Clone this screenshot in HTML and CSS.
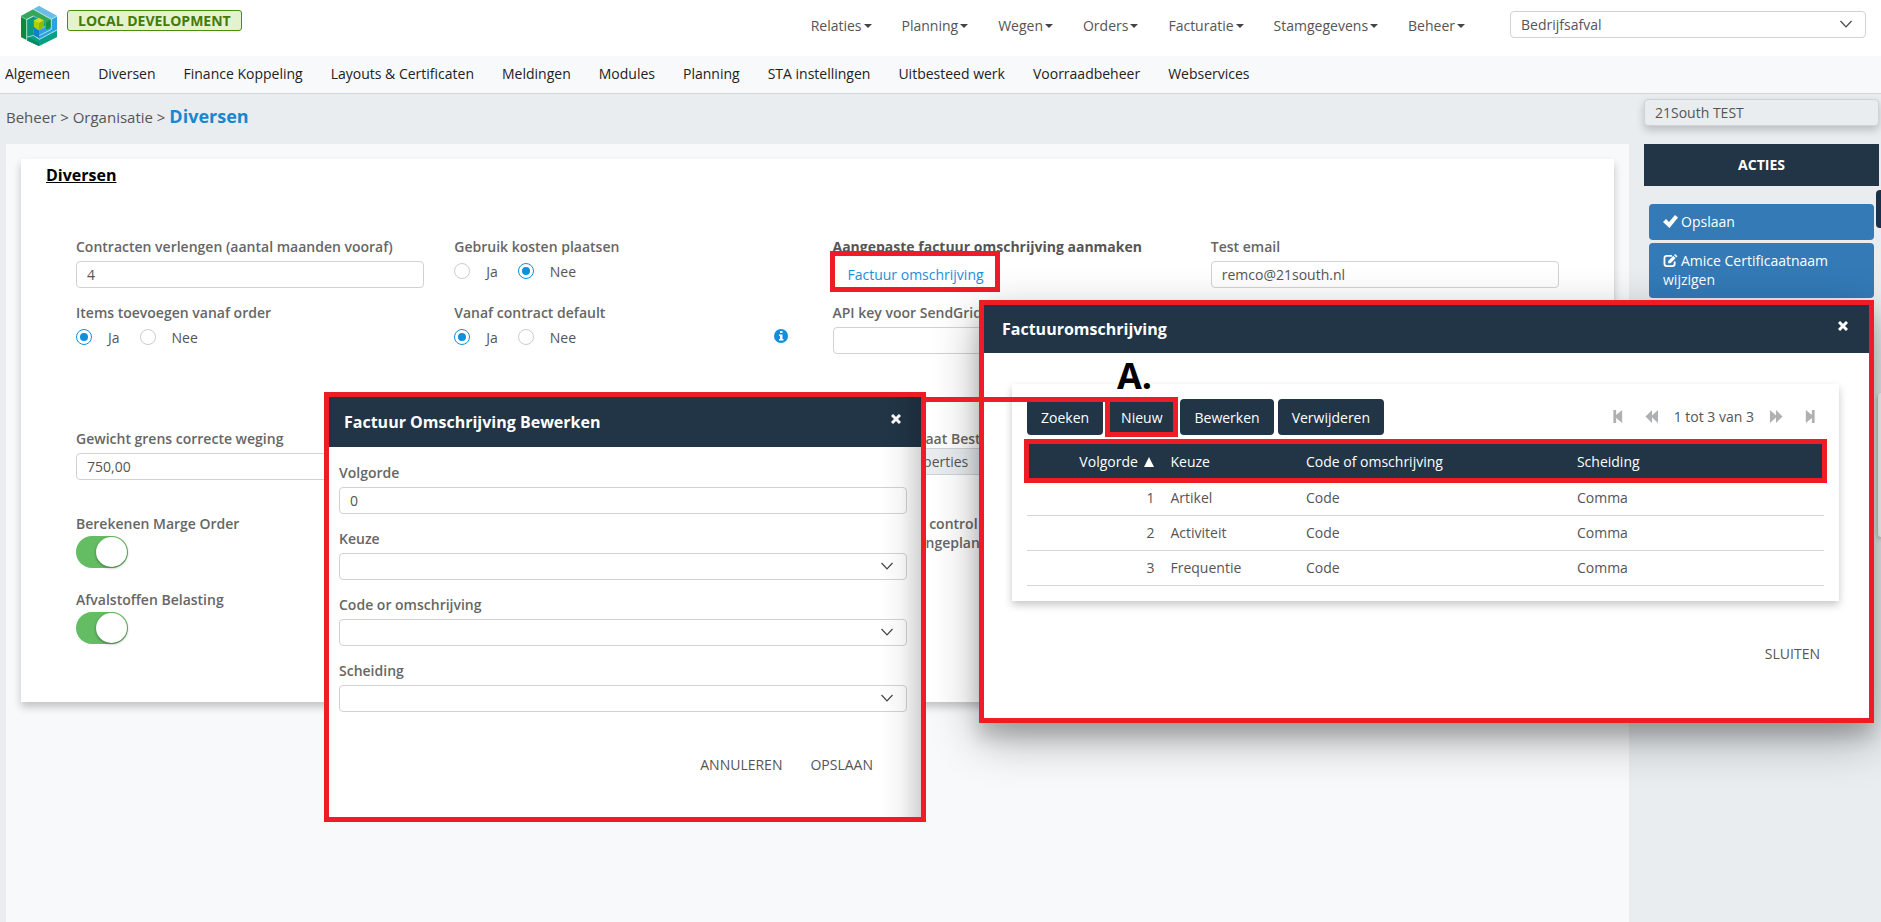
FILE: index.html
```html
<!DOCTYPE html>
<html lang="nl">
<head>
<meta charset="utf-8">
<title>Diversen</title>
<meta name="viewport" content="width=device-width, initial-scale=1">
<link rel="stylesheet" href="styles.css">
</head>
<body>
<svg class="sprite" aria-hidden="true">
  <symbol id="chevron" viewBox="0 0 12 8"><path d="M.5 1 6 6.8 11.500 1" fill="none" stroke="currentColor" stroke-width="1.200"/></symbol>
  <symbol id="close" viewBox="0 0 10 10"><path d="M1 1l8 8M9 1L1 9" fill="none" stroke="currentColor" stroke-width="3"/></symbol>
  <symbol id="first" viewBox="0 0 10 14"><path d="M0 0h3v5.500L9.500 0v14L3 8.500V14H0z" fill="currentColor"/></symbol>
  <symbol id="prev" viewBox="0 0 14 14"><path d="M7 0v5.800L13.500 0v14L7 8.200V14L0 7z" fill="currentColor"/></symbol>
</svg>

<header class="topbar">
  <svg class="logo" viewBox="0 0 36 40" role="img" aria-label="Logo">
    <path d="M18 0 36 10V31L18 40 0 31V10z" fill="#7cc9b0"/>
    <path d="M0 11 5.500 14V34L0 31z" fill="#0a8a3c"/>
    <path d="M0 10 12 3.400 30 13.500V23.500L24.500 26V16.500L12.500 9.500 5.500 13z" fill="#35a75a"/>
    <path d="M24.800 16.500 30 13.500V23.500L24.800 26z" fill="#0f9441"/>
    <path d="M12.700 3 18 0 36 10 30.500 13z" fill="#6cbcea"/>
    <path d="M30.500 13.500 36 10.500V23.500L18.500 33V27L30.500 21z" fill="#2ba3e2"/>
    <path d="M6 14 12.500 10.500 24 16.500V20L12.500 23V34L6 31z" fill="#0a9a7c"/>
    <path d="M6 31 12 28.500 18 33.500 36 24.200V31L18 40 6 34.500z" fill="#06a087"/>
    <path d="M6 31 18 36.500V40L6 34.500z" fill="#088a63"/>
    <path d="M12.500 21.500 18.500 24.500V32.500L12.500 29.500z" fill="#0b83cc"/>
    <path d="M18.500 24 24.500 21V26L18.500 29z" fill="#2f9fe0"/>
    <path d="M12.800 14.500 18 12 22.800 14.500V21L18 23.800 12.800 21z" fill="#b3cc06"/>
    <path d="M12.800 14.500 18 12 22.800 14.500 18 17z" fill="#d3de1c"/>
    <path d="M18 17 22.800 14.500V21L18 23.800z" fill="#93b50c"/>
    <path d="M5.700 34V13.500L12.300 10M30.300 13.200V23.500L18.300 29.500M12.300 3.200 30.300 13.200 36 10.200M6 31 12.500 29.500 18.500 33.300 36 24" fill="none" stroke="#d8f0ec" stroke-width=".7"/>
  </svg>
  <span class="env">LOCAL DEVELOPMENT</span>
  <nav class="menu" aria-label="Hoofdmenu">
    <button type="button">Relaties</button>
    <button type="button">Planning</button>
    <button type="button">Wegen</button>
    <button type="button">Orders</button>
    <button type="button">Facturatie</button>
    <button type="button">Stamgegevens</button>
    <button type="button">Beheer</button>
  </nav>
  <div class="select company">
    <select aria-label="Bedrijf"><option>Bedrijfsafval</option></select>
    <svg class="chevron"><use href="#chevron"/></svg>
  </div>
</header>

<nav class="subnav" aria-label="Submenu">
  <a href="#">Algemeen</a>
  <a href="#">Diversen</a>
  <a href="#">Finance Koppeling</a>
  <a href="#">Layouts &amp; Certificaten</a>
  <a href="#">Meldingen</a>
  <a href="#">Modules</a>
  <a href="#">Planning</a>
  <a href="#">STA instellingen</a>
  <a href="#">Uitbesteed werk</a>
  <a href="#">Voorraadbeheer</a>
  <a href="#">Webservices</a>
</nav>

<div class="page">
  <div class="crumbs">Beheer &gt; Organisatie &gt; <h1>Diversen</h1></div>
  <div class="tenant"><input class="control disabled" type="text" value="21South TEST" aria-label="Organisatie" readonly></div>

  <main class="panel">
    <form class="card">
      <h2>Diversen</h2>

      <div class="row">
        <div class="field">
          <label for="months">Contracten verlengen (aantal maanden vooraf)</label>
          <input class="control" id="months" type="text" value="4">
        </div>
        <fieldset class="field">
          <legend>Gebruik kosten plaatsen</legend>
          <div class="radios">
            <label><input type="radio" name="cost">Ja</label>
            <label><input type="radio" name="cost" checked>Nee</label>
          </div>
        </fieldset>
        <div class="field marked-field">
          <span class="label strong">Aangepaste factuur omschrijving aanmaken</span>
          <a class="link-button" href="#">Factuur omschrijving</a>
          <span class="mark"></span>
        </div>
        <div class="field">
          <label for="mail">Test email</label>
          <input class="control" id="mail" type="text" value="remco@21south.nl">
        </div>
      </div>

      <div class="row">
        <fieldset class="field">
          <legend>Items toevoegen vanaf order</legend>
          <div class="radios">
            <label><input type="radio" name="items" checked>Ja</label>
            <label><input type="radio" name="items">Nee</label>
          </div>
        </fieldset>
        <fieldset class="field">
          <legend>Vanaf contract default</legend>
          <div class="radios">
            <label><input type="radio" name="contract" checked>Ja</label>
            <label><input type="radio" name="contract">Nee</label>
          </div>
          <svg class="info" viewBox="0 0 14 14" role="img" aria-label="Info"><circle cx="7" cy="7" r="7" fill="#0f8fdc"/><path d="M6 2h2.500v2H6zM5 5.500h3.500v4.500H9.500v1.500H5V10h1V7H5z" fill="#fff"/></svg>
        </fieldset>
        <div class="field">
          <label for="apikey">API key voor SendGrid</label>
          <input class="control" id="apikey" type="text">
        </div>
      </div>

      <div class="row row-weight">
        <div class="field">
          <label for="weight">Gewicht grens correcte weging</label>
          <input class="control" id="weight" type="text" value="750,00">
        </div>
        <div class="field third tight">
          <label class="inset" for="props">aat Best</label>
          <input class="control disabled inset-value" id="props" type="text" value="Properties" readonly>
        </div>
      </div>

      <div class="row row-switch">
        <div class="field">
          <label for="margin">Berekenen Marge Order</label>
          <input class="switch" id="margin" type="checkbox" role="switch" checked>
        </div>
        <div class="field third">
          <span class="label inset">&nbsp;control<br>ngeplan</span>
        </div>
      </div>

      <div class="row row-switch">
        <div class="field">
          <label for="waste">Afvalstoffen Belasting</label>
          <input class="switch" id="waste" type="checkbox" role="switch" checked>
        </div>
      </div>
    </form>
  </main>

  <aside class="side">
    <h2>ACTIES</h2>
    <div class="actions">
      <button type="button"><svg viewBox="0 0 15 13"><path d="M0 7 3 4l3 3 6-7 3 2.500L6.500 13z" fill="currentColor"/></svg>Opslaan</button>
      <button type="button"><svg viewBox="0 0 15 14"><path d="M9 2H3.500Q1 2 1 4.500v6Q1 13 3.500 13h6Q12 13 12 10.500V8" fill="none" stroke="currentColor" stroke-width="2"/><path d="M5 10V7.500l5.500-5.500 2.500 2.500L7.500 10zM11.300 1.200 12.500 0 15 2.500 13.800 3.700z" fill="currentColor"/></svg>Amice Certificaatnaam wijzigen</button>
    </div>
  </aside>
</div>

<span class="edge-tab"></span>
<span class="edge-panel"></span>

<section class="dialog list" role="dialog" aria-labelledby="list-title">
  <header><h2 id="list-title">Factuuromschrijving</h2><button type="button" aria-label="Sluiten"><svg><use href="#close"/></svg></button></header>
  <div class="list-body">
    <span class="letter">A.</span>
    <div class="list-card">
      <div class="toolbar">
        <button class="dark" type="button">Zoeken</button>
        <button class="dark ringed" type="button">Nieuw</button>
        <button class="dark" type="button">Bewerken</button>
        <button class="dark" type="button">Verwijderen</button>
        <div class="pager">
          <button type="button" aria-label="Eerste"><svg class="narrow"><use href="#first"/></svg></button>
          <button type="button" aria-label="Vorige"><svg><use href="#prev"/></svg></button>
          <span>1 tot 3 van 3</span>
          <button type="button" aria-label="Volgende"><svg class="flip"><use href="#prev"/></svg></button>
          <button type="button" aria-label="Laatste"><svg class="narrow last flip"><use href="#first"/></svg></button>
        </div>
      </div>
      <table>
        <thead><tr><th class="num">Volgorde <svg class="sort" viewBox="0 0 10 10"><path d="M5 0l5 10H0z" fill="currentColor"/></svg></th><th class="c2">Keuze</th><th class="c3">Code of omschrijving</th><th>Scheiding</th></tr></thead>
        <tbody>
          <tr><td class="num">1</td><td>Artikel</td><td>Code</td><td>Comma</td></tr>
          <tr><td class="num">2</td><td>Activiteit</td><td>Code</td><td>Comma</td></tr>
          <tr><td class="num">3</td><td>Frequentie</td><td>Code</td><td>Comma</td></tr>
        </tbody>
      </table>
    </div>
    <footer><button type="button">SLUITEN</button></footer>
  </div>
</section>

<section class="dialog edit" role="dialog" aria-labelledby="edit-title">
  <header><h2 id="edit-title">Factuur Omschrijving Bewerken</h2><button type="button" aria-label="Sluiten"><svg><use href="#close"/></svg></button></header>
  <form class="edit-body">
    <div class="field"><label for="order">Volgorde</label><input class="control" id="order" type="text" value="0"></div>
    <div class="field"><label for="choice">Keuze</label><div class="select"><select id="choice"><option></option></select><svg class="chevron"><use href="#chevron"/></svg></div></div>
    <div class="field"><label for="code">Code or omschrijving</label><div class="select"><select id="code"><option></option></select><svg class="chevron"><use href="#chevron"/></svg></div></div>
    <div class="field"><label for="sep">Scheiding</label><div class="select"><select id="sep"><option></option></select><svg class="chevron"><use href="#chevron"/></svg></div></div>
    <footer><button type="button">ANNULEREN</button><button type="button">OPSLAAN</button></footer>
  </form>
</section>
<span class="connector"></span>
</body>
</html>
```
FILE: styles.css
```css
* { box-sizing: border-box; }
:root { --navy: #213547; --red: #ee1c24; --line: #d0d2d3; --text: #555; --pale: #f8f9fb; --grey: #e9edf0; --blue: #0f8fdc; }
body { margin: 0; min-height: 100vh; display: flex; flex-direction: column; position: relative; overflow: hidden; background: var(--grey); color: var(--text); font: 14px/19px "Open Sans", "Noto Sans", sans-serif; }
h1, h2 { margin: 0; }
button, input, select { font: inherit; color: inherit; }
button { background: none; border: 0; padding: 0; }
a { text-decoration: none; color: inherit; }
.sprite { position: absolute; width: 0; height: 0; }

.topbar { display: flex; align-items: flex-start; height: 56px; padding: 0 15px 0 21px; background: #fff; }
.logo { width: 36px; height: 40px; margin-top: 6px; }
.env { margin: 10px 0 0 10px; padding: 0 10px; border: 1px solid #4e8c0c; border-radius: 3px; background: #e3f3cd; color: #447a08; font-weight: 700; }
.menu { display: flex; margin: 16px 30px 0 auto; }
.menu button { display: flex; align-items: center; padding: 0 15px; }
.menu button::after { content: ""; margin-left: 2px; border: 4px solid transparent; border-top-color: #444; border-bottom: 0; }
.company { width: 356px; margin-top: 11px; }

.control, .select select { display: block; width: 100%; height: 27px; padding: 0 10px; border: 1px solid var(--line); border-radius: 4px; background: #fff; outline: 0; }
.select { position: relative; }
.select select { appearance: none; }
.chevron { position: absolute; right: 14px; top: 9px; width: 12px; height: 8px; color: #444; pointer-events: none; }
.disabled { background: var(--grey); }

.subnav { display: flex; gap: 28px; height: 38px; padding: 8px 5px 0; background: var(--pale); border-bottom: 1px solid #d3d6d8; color: #222; white-space: nowrap; }

.page { flex: 1; display: grid; grid-template: 50px 1fr / 1fr 235px; column-gap: 15px; padding: 0 2px 0 6px; }
.crumbs { padding-top: 11px; line-height: 22px; font-size: 15px; }
.crumbs h1 { display: inline; color: #1787cf; font-size: 18px; font-weight: 700; }
.tenant { padding-top: 5px; }
.tenant .control { box-shadow: 0 4px 8px rgba(0, 0, 0, .2); }
.panel { background: var(--pale); padding: 15px; }
.card { background: #fff; padding: 6px 55px 58px; box-shadow: 0 5px 8px rgba(0, 0, 0, .22); }
.card h2 { margin: 0 0 52px -30px; color: #000; font-size: 16px; line-height: 20px; font-weight: 700; text-decoration: underline; }
.row { display: grid; grid-template-columns: repeat(4, 1fr); column-gap: 30px; margin-bottom: 15px; }
.row-weight { margin: 75px 0 34px; }
.row-switch { margin-bottom: 22px; }
.row-switch:last-child { margin-bottom: 0; }
.field { position: relative; margin: 0; padding: 0; border: 0; min-width: 0; }
.field > label, .field > legend, .label { display: block; margin-bottom: 5px; padding: 0; font-weight: 600; color: #666; white-space: nowrap; }
.field > .strong { font-weight: 700; color: #555; }
.third { grid-column: 3; }
.tight > label { margin-bottom: 0; }
.field > .inset { padding-left: 93px; }
.inset-value { padding-left: 67px; }
.radios { display: flex; gap: 20px; height: 20px; }
.radios label { display: flex; align-items: center; gap: 16px; }
.radios input { appearance: none; display: grid; place-items: center; width: 16px; height: 16px; margin: 0; border: 1px solid #ccc; border-radius: 50%; background: #fff; }
.radios input:checked { border-color: var(--blue); }
.radios input:checked::before { content: ""; width: 8px; height: 8px; border-radius: 50%; background: var(--blue); }
.info { position: absolute; right: 15px; top: 2px; width: 14px; height: 14px; }
.link-button { display: inline-block; padding: 4px 15px; color: #1b8fd9; }
.mark { position: absolute; left: -3px; top: 14px; width: 170px; height: 41px; border: 5px solid var(--red); }
.switch { appearance: none; display: block; width: 52px; height: 32px; margin: -2px 0 0; padding: 1px; border-radius: 16px; background: #64bd63; }
.switch::before { content: ""; display: block; width: 31px; height: 30px; margin-left: auto; border-radius: 50%; background: #fff; box-shadow: 0 1px 3px rgba(0, 0, 0, .4); }

.side h2 { padding: 11px 0; background: var(--navy); color: #fff; font-size: 14px; line-height: 20px; text-align: center; }
.actions { display: grid; gap: 3px; margin: 18px 5px; }
.actions button { padding: 8px 14px 9px; border-radius: 4px; background: #337ab7; color: #fff; text-align: left; }
.actions svg { width: 15px; height: 13px; margin-right: 3px; vertical-align: -1px; }
.edge-tab { position: absolute; right: 0; top: 190px; width: 5px; height: 38px; border-radius: 4px 0 0 4px; background: #1b3049; }
.edge-panel { position: absolute; right: 0; top: 393px; width: 3px; height: 144px; border-radius: 4px 0 0 4px; background: #fff; box-shadow: 0 2px 4px rgba(0, 0, 0, .4); }

.dialog { position: absolute; border: 5px solid var(--red); background: #fff; }
.dialog > header { display: flex; justify-content: space-between; align-items: center; background: var(--navy); color: #fff; }
.dialog > header h2 { font-size: 16px; line-height: 20px; }
.dialog > header svg { display: block; width: 10px; height: 10px; }
.dialog footer { display: flex; justify-content: flex-end; gap: 28px; }

.list { right: 7px; top: 300px; width: 895px; box-shadow: 0 14px 16px rgba(0, 0, 0, .14), 0 16px 44px rgba(0, 0, 0, .32); }
.list > header { height: 48px; padding: 0 21px 0 18px; }
.list > header button { margin-bottom: 7px; }
.list-body { position: relative; padding: 31px 30px 55px 28px; }
.letter { position: absolute; left: 133px; top: 3px; color: #000; font-size: 36px; line-height: 40px; font-weight: 700; }
.list-card { padding: 15px; box-shadow: 0 4px 8px rgba(0, 0, 0, .22); }
.toolbar { display: flex; gap: 4px; }
.dark { height: 36px; padding: 0 14px; border-radius: 4px; background: var(--navy); color: #fff; }
.ringed { outline: 5px solid var(--red); outline-offset: -3px; border-radius: 0; }
.pager { display: flex; align-items: center; gap: 15px; margin: 0 9px 2px auto; color: #aeb1b3; }
.pager span { color: var(--text); }
.pager svg { display: block; width: 14px; height: 13px; }
.pager .narrow { width: 10px; margin-right: 7px; }
.pager .last { margin: 0 0 0 7px; }
.flip { transform: scaleX(-1); }
table { width: 100%; margin-top: 7px; border-collapse: collapse; table-layout: fixed; }
thead { background: var(--navy); color: #fff; outline: 5px solid var(--red); outline-offset: -2px; }
th, td { height: 35px; padding: 0 8px; text-align: left; font-weight: 400; border-bottom: 1px solid #d3d5d6; }
th { height: 38px; font-weight: 500; border: 0; }
.num { width: 17%; text-align: right; }
.c2 { width: 17%; }
.c3 { width: 34%; }
.sort { width: 10px; height: 10px; margin-left: 3px; }
.list footer { padding: 43px 19px 0 0; }

.edit { left: 324px; top: 392px; width: 602px; }
.edit::after { content: ""; position: absolute; top: 0; right: 0; bottom: 0; width: 40px; background: linear-gradient(to right, transparent, rgba(0, 0, 0, .04) 50%, rgba(0, 0, 0, .17)); pointer-events: none; }
.edit > header { height: 50px; padding: 0 20px 0 15px; }
.edit > header button { margin-bottom: 6px; }
.edit-body { display: grid; gap: 15px; padding: 16px 14px 43px 10px; }
.edit footer { padding: 28px 34px 0 0; }
.connector { position: absolute; left: 926px; right: 774px; top: 397px; height: 5px; background: var(--red); }
```
